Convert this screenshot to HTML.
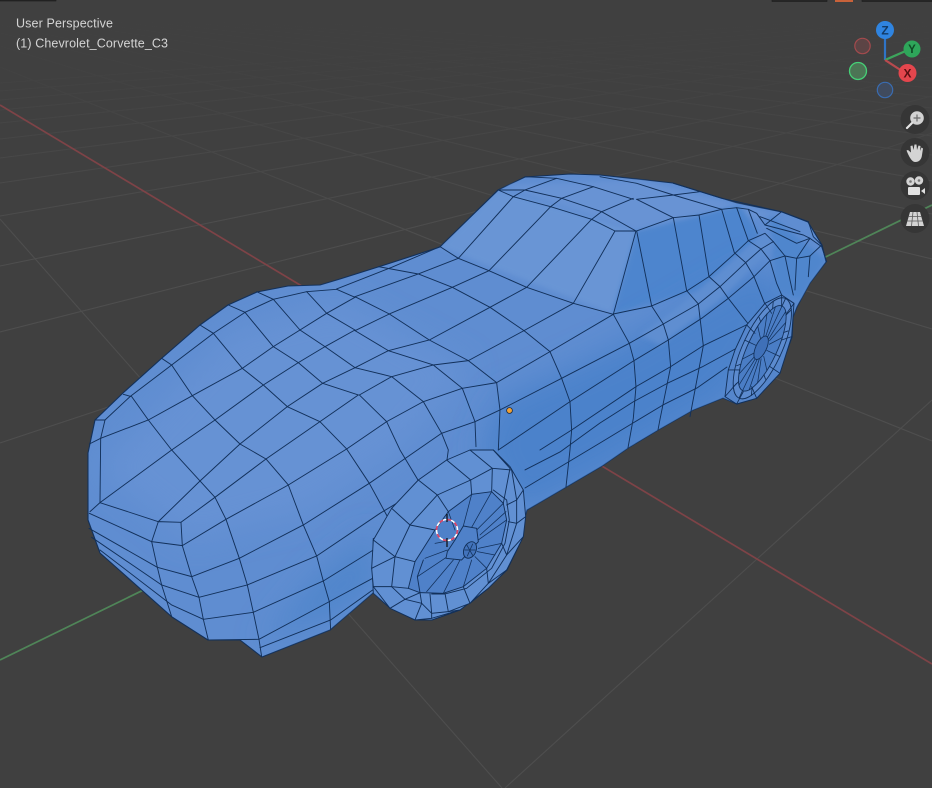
<!DOCTYPE html>
<html><head><meta charset="utf-8"><style>
html,body{margin:0;padding:0;background:#404040;width:932px;height:788px;overflow:hidden}
svg{position:absolute;left:0;top:0}
text{font-family:"Liberation Sans",sans-serif}
</style></head><body>
<svg width="932" height="788" viewBox="0 0 932 788" xmlns="http://www.w3.org/2000/svg">
<defs>
<clipPath id="bodyclip"><polygon points="88,510 88,453 95,420 123,393 162,358 200,325 228,305 257,292 288,286 320,285 340,279 378,267 440,247 498,190 525,177 570,174 600,175 673,183 737,203 782,212 808,222 822,245 826,262 810,283 797,307 793,317 792,337 780,370 757,398 737,404 723,398 693,410 658,430 628,448 602,466 527,510 525,517 523,537 507,570 488,588 460,610 432,620 415,620 390,608 373,593 330,630 262,657 240,640 208,640 172,617 100,553 88,520"/></clipPath>
<filter id="b8" x="-30%" y="-30%" width="160%" height="160%"><feGaussianBlur stdDeviation="15"/></filter>
<filter id="b3" x="-30%" y="-30%" width="160%" height="160%"><feGaussianBlur stdDeviation="2.500"/></filter>
<linearGradient id="fade" x1="0" y1="0" x2="0" y2="1"><stop offset="0" stop-color="#404040" stop-opacity="1"/><stop offset=".3" stop-color="#404040" stop-opacity=".88"/><stop offset=".65" stop-color="#404040" stop-opacity=".45"/><stop offset="1" stop-color="#404040" stop-opacity="0"/></linearGradient>
</defs>
<rect width="932" height="788" fill="#404040"/>
<!-- grid -->
<g stroke="#4e4e4e" stroke-width="1.100" fill="none">
<path d="M932,400L505,788M932,133L0,443M932,96L0,332M932,74L0,266M932,57L0,216M932,46L0,183M932,38L0,158M932,32L0,139M932,26L0,123M932,22L0,110M932,19L0,100M932,16L0,91M932,13L0,83"/>
<path d="M0,219L502,788M0,67L932,441M0,46L932,329M0,33L932,259M0,25L932,214M0,19L932,181M0,14L932,155M0,11L932,136M0,8L932,120M0,6L932,108M0,4L932,97M0,2L932,88M0,1L932,81M0,0L932,68"/>
</g>
<rect x="0" y="0" width="932" height="240" fill="url(#fade)"/>
<line x1="0" y1="105" x2="932" y2="664" stroke="#7e4347" stroke-width="1.700"/>
<line x1="0" y1="660" x2="932" y2="205" stroke="#4f8558" stroke-width="1.700"/>

<!-- toolbar remnants -->
<g fill="#2b2b2b" stroke="#1c1c1c" stroke-width=".6"><rect x="0" y="0" width="56" height="1"/><rect x="772" y="0" width="55" height="1.500"/><rect x="862" y="0" width="70" height="1.500"/></g>
<rect x="835" y="0" width="18" height="2" fill="#c8623a"/>

<!-- car body -->
<polygon points="88,510 88,453 95,420 123,393 162,358 200,325 228,305 257,292 288,286 320,285 340,279 378,267 440,247 498,190 525,177 570,174 600,175 673,183 737,203 782,212 808,222 822,245 826,262 810,283 797,307 793,317 792,337 780,370 757,398 737,404 723,398 693,410 658,430 628,448 602,466 527,510 525,517 523,537 507,570 488,588 460,610 432,620 415,620 390,608 373,593 330,630 262,657 240,640 208,640 172,617 100,553 88,520" fill="#5f8dd1" stroke="#12305a" stroke-width="1.100" stroke-linejoin="round"/>
<g clip-path="url(#bodyclip)">
<polygon points="100,470 230,330 340,300 470,370 400,450 310,510 190,540" fill="#6692d4" filter="url(#b8)"/>
<polygon points="440,247 498,190 637,231 613,314" fill="#6995d5" filter="url(#b3)"/>
<polygon points="500,185 640,180 780,215 640,232" fill="#6793d4" filter="url(#b3)"/>
<polygon points="637,231 613,314 700,290 760,235 740,205" fill="#4e85ce" filter="url(#b3)"/>
<polygon points="500,400 620,345 760,265 795,300 730,400 600,475 520,515 480,450" fill="#4c82cb" filter="url(#b8)"/>
<polygon points="260,645 335,615 373,590 375,530 310,585" fill="#5085cb" filter="url(#b8)"/>
<polygon points="770,215 826,260 800,300 775,290" fill="#5086cd" filter="url(#b3)"/>
<polygon points="640,335 700,290 765,235 775,245 720,300 660,345" fill="#5f8ed1" filter="url(#b3)"/>
</g>

<g fill="none" stroke="#12305a" stroke-width="2.800" stroke-linejoin="round" stroke-linecap="round" transform="translate(80 280) scale(.3333)">
<polyline points="28,492 62,475 205,420 337,347 487,265 580,200 660,150 740,100 825,52"/>
<polyline points="75,420 150,350 275,255 400,160 495,97 580,58 680,35 770,28"/>
<polyline points="60,668 275,510 405,420 550,315 655,248 735,200 825,150"/>
<polyline points="235,725 360,603 480,492 622,380 728,310 825,263"/>
<polyline points="303,727 405,652 558,537 720,425 835,345"/>
<polyline points="307,797 438,718 625,615 800,507 920,425"/>
<polyline points="335,890 478,835 670,735 868,610 1086,459"/>
<polyline points="357,952 502,915 710,828 900,700 1000,640"/>
<polyline points="370,1018 520,997 730,903 880,810"/>
<polyline points="385,1080 537,1078 748,965 878,895"/>
<polyline points="540,1103 752,1020 878,930"/>
<polyline points="130,343 155,350 205,420 275,510 360,603 405,652 438,718 478,835 502,915 520,997 537,1078 545,1130"/>
<polyline points="245,235 275,255 337,347 405,420 480,492 558,537 625,615 670,735 710,828 730,903 748,965 752,1050"/>
<polyline points="360,135 400,160 487,265 550,315 622,380 720,425 800,507 868,610 936,735"/>
<polyline points="445,75 495,97 580,200 655,248 728,310 835,345"/>
<polyline points="530,35 580,58 660,150 735,200 825,263"/>
<polyline points="680,35 740,100 825,150"/>
<polyline points="770,28 825,52"/>
<polyline points="45,420 75,420 62,475 60,668 30,695"/>
<polyline points="60,668 235,725 303,727 307,797 215,785 235,725"/>
<polyline points="28,700 215,785 232,862 245,915 275,1010"/>
<polyline points="307,797 335,890 357,952 370,1018 385,1080"/>
<polyline points="27,745 232,862 335,890"/>
<polyline points="35,772 245,915 357,952"/>
<polyline points="60,810 275,975 370,1018"/>
<polyline points="880,775 878,895 880,940"/>
</g>

<g fill="none" stroke="#12305a" stroke-width="2.800" stroke-linejoin="round" stroke-linecap="round" transform="translate(340 170) scale(.3333)">
<polyline points="-10,357 155,292 300,230 475,60"/>
<polyline points="45,380 235,312 355,265 520,80"/>
<polyline points="45,482 148,432 337,352 447,302 632,110"/>
<polyline points="45,593 145,542 268,510 450,412 560,352 755,148"/>
<polyline points="58,675 155,620 280,585 385,572 552,482 700,400 825,183"/>
<polyline points="140,755 250,695 367,655 470,638 630,545 820,433 888,183"/>
<polyline points="305,790 405,755 480,720 665,625 868,520"/>
<polyline points="475,840 690,695 882,572"/>
<polyline points="600,840 695,780 888,650"/>
<polyline points="115,290 235,312 337,352 450,412 552,482 630,545 665,625 690,695 695,780 690,840 678,951"/>
<polyline points="45,380 148,432 268,510 385,572 470,638 480,720 475,840"/>
<polyline points="45,482 145,542 280,585 367,655 405,755 408,830"/>
<polyline points="45,593 155,620 250,695 305,790 325,840 321,870"/>
<polyline points="58,675 140,755 180,840 234,930"/>
<polyline points="300,230 355,265 447,302 560,352 700,400 820,433 868,520 882,572 888,650 880,745 864,834"/>
<polyline points="475,60 520,80 632,110 755,148 825,183 888,183"/>
<polyline points="475,60 555,60 665,85 785,125 888,183"/>
<polyline points="520,80 555,60 650,25"/>
<polyline points="632,110 665,85 760,50"/>
<polyline points="755,148 785,125 880,85"/>
<polyline points="555,20 650,25 760,50 880,88"/>
</g>

<g fill="none" stroke="#12305a" stroke-width="2.800" stroke-linejoin="round" stroke-linecap="round" transform="translate(600 170) scale(.3333)">
<polyline points="110,183 220,143 297,135 365,118 410,113 445,118 470,130 495,165"/>
<polyline points="0,20 110,40 220,75 365,118"/>
<polyline points="110,88 220,143"/>
<polyline points="110,88 220,75 300,65"/>
<polyline points="220,40 365,85 545,125 625,155"/>
<polyline points="40,432 155,408 262,362 327,320 405,250 445,212 495,190 520,215"/>
<polyline points="110,183 155,408 190,462 205,510 212,590 180,748 174,780"/>
<polyline points="220,143 260,362 295,402 310,527 270,740"/>
<polyline points="297,135 327,320 360,350 385,385 445,462"/>
<polyline points="365,118 403,248 437,278 462,320 497,408"/>
<polyline points="410,113 445,212 483,237 510,272 530,340 545,375"/>
<polyline points="445,118 472,190"/>
<polyline points="520,215 555,258 570,330 580,375"/>
<polyline points="590,265 585,360"/>
<polyline points="630,258 625,320"/>
<polyline points="88,520 190,462 295,402 360,350 437,278 483,237 520,215"/>
<polyline points="102,572 205,510 305,445 385,385 462,320 510,272 555,258 590,265 630,258 665,225"/>
<polyline points="108,650 212,590 310,527 445,462"/>
<polyline points="-225,900 -120,846 0,759 99,696 204,639 306,591 411,534"/>
<polyline points="-225,954 0,819 99,759 189,705 291,654 381,591"/>
<polyline points="495,165 545,125"/>
<polyline points="495,165 610,195 630,205 590,265"/>
<polyline points="500,175 590,220 630,205 665,230 680,275"/>
<polyline points="625,155 640,200 665,225"/>
<polyline points="480,140 600,185"/>
</g>

<!-- rear wheel -->
<g transform="translate(600 170) scale(.3333)" stroke-linejoin="round" stroke-linecap="round">
<polygon points="375,680 385,600 405,540 440,465 495,400 545,375 582,400 575,500 540,610 470,685 410,702" fill="#5586cc" stroke="#12305a" stroke-width="2.800"/>
<g transform="translate(487 535) rotate(25)">
<ellipse cx="0" cy="0" rx="58" ry="165" fill="#5c8bcf" stroke="#12305a" stroke-width="2.600"/>
<ellipse cx="0" cy="0" rx="44" ry="140" fill="#4a7dc5" stroke="#12305a" stroke-width="2.600"/>
<path d="M0,-30L0,-140M5,-30L17,-130M10,-30L31,-100M14,-20L41,-55M15,0L44,0M14,20L41,55M10,30L31,100M5,30L17,130M0,30L0,140M-5,30L-17,130M-10,30L-31,100M-14,20L-41,55M-15,0L-44,0M-14,-20L-41,-55M-10,-30L-31,-100M-5,-30L-17,-130" stroke="#12305a" stroke-width="2.200" fill="none"/>
<ellipse cx="-4" cy="0" rx="16" ry="38" fill="#3f70b8" stroke="#12305a" stroke-width="2.600"/>
<path d="M-58,0L-44,0M58,0L44,0M0,-165L0,-140M0,165L0,140M-48,-80L-38,-70M48,-80L38,-70M-48,80L-38,70M48,80L38,70M-30,-142L-22,-120M30,-142L22,-120M-30,142L-22,120M30,142L22,120" stroke="#12305a" stroke-width="2.600" fill="none"/>
</g>
<path d="M375,680L410,640M385,600L420,600M440,465L465,490M495,400L515,430M545,375L545,410M582,400L560,430M575,500L545,510M540,610L510,590M470,685L455,650M410,702L430,665" stroke="#12305a" stroke-width="2.600" fill="none"/>
</g>

<!-- front wheel -->
<g transform="translate(360 440) scale(.3333)" stroke-linejoin="round" stroke-linecap="round" stroke="#12305a" stroke-width="2.800">
<polygon points="40,300 95,205 175,120 260,60 330,30 400,30 450,80 490,150 497,230 490,290 440,390 385,445 300,510 215,535 165,540 90,505 40,440 35,385" fill="#6190d3"/>
<polygon points="105,350 95,440 135,478 185,490 215,520 265,515 330,490 385,430 440,345 470,250 470,180 455,90 397,85 332,120 232,165 150,255" fill="#6190d3"/>
<polygon points="145,445 165,365 225,270 265,215 335,163 395,155 430,190 440,240 425,310 380,385 310,440 250,460 180,458" fill="#4f81c9"/>
<polyline points="185,490 180,458 172,410 190,360" fill="none"/>
<polyline points="215,462 255,462 320,445 395,385 435,310 448,240 440,180 400,150" fill="none"/>
<path d="M40,300L105,350L165,365M95,205L150,255L225,270M175,120L232,165L265,215M260,60L332,120L335,163M330,30L397,85L395,155M400,30L450,85L430,190M490,150L470,180L440,195M497,230L470,250L445,245M490,290L440,345L425,310M440,390L385,430L380,385M385,445L330,490L310,440M300,510L265,515L255,460M215,535L215,520L210,462M165,540L185,490M90,505L135,478L180,458M40,440L95,440L145,445M35,385L105,350" fill="none"/>
<path d="M280,300L225,310M262,330L195,355M262,350L172,410M280,360L200,455M300,360L250,460M335,360L310,440M345,350L380,385M355,325L425,310M355,300L440,240M350,270L430,190M335,262L395,155M310,258L335,163M285,270L265,215M360,285L438,215M352,335L405,345" fill="none" stroke-width="2.300"/>
<polygon points="262,335 258,355 305,360 355,305 350,265 310,258 285,300" fill="#4f81c9"/>
<ellipse cx="330" cy="330" rx="18" ry="26" transform="rotate(25 330 330)" fill="#4273bb"/>
<path d="M314,330L346,330M320,314L338,346M338,312L322,348" fill="none" stroke-width="2.200"/>
</g>

<!-- 3D cursor -->
<g fill="none">
<circle cx="447" cy="530" r="10.500" stroke="#ffffff" stroke-width="1.600"/>
<circle cx="447" cy="530" r="10.500" stroke="#d6456a" stroke-width="1.800" stroke-dasharray="4.100 4.100"/>
<path d="M447,514V522M447,538V547" stroke="#0a0a0a" stroke-width="1.200"/>
</g>
<circle cx="509.500" cy="410.500" r="2.900" fill="#f0a033" stroke="#1c2a40" stroke-width=".8"/>

<!-- gizmo -->
<g>
<line x1="885" y1="60" x2="885" y2="32" stroke="#2f74c6" stroke-width="2.200"/>
<line x1="885" y1="60" x2="908" y2="50" stroke="#3da45c" stroke-width="2.200"/>
<line x1="885" y1="60" x2="902" y2="71" stroke="#b84a4e" stroke-width="2.200"/>
<circle cx="862.500" cy="46" r="7.700" fill="#5c4445" stroke="#a34a4d" stroke-width="1.200"/>
<circle cx="858" cy="71" r="8.500" fill="#4c7555" stroke="#46d077" stroke-width="1.300"/>
<circle cx="885" cy="90" r="7.700" fill="#404b5e" stroke="#3a6cb0" stroke-width="1.200"/>
<circle cx="885" cy="30" r="9" fill="#2f84e0"/>
<circle cx="912" cy="49" r="8.500" fill="#2ea65a"/>
<circle cx="907.500" cy="73" r="9" fill="#e4464d"/>
<text x="885" y="34.500" text-anchor="middle" font-size="12" font-weight="700" fill="#123a66">Z</text>
<text x="912" y="53" text-anchor="middle" font-size="11.500" font-weight="700" fill="#0f4a25">Y</text>
<text x="907.500" y="77.500" text-anchor="middle" font-size="12" font-weight="700" fill="#5a0f12">X</text>
</g>

<!-- nav buttons -->
<g fill="#363636"><circle cx="915" cy="119.500" r="14.500"/><circle cx="915" cy="152.500" r="14.500"/><circle cx="915" cy="185.500" r="14.500"/><circle cx="915" cy="218.500" r="14.500"/></g>
<g>
<circle cx="917" cy="118" r="6.800" fill="#d2d2d2"/>
<path d="M917,114.500V121.500M913.500,118H920.500" stroke="#6a6a6a" stroke-width="1.200"/>
<path d="M912,123L907,128" stroke="#e4e4e4" stroke-width="2.200" stroke-linecap="round"/>
<path d="M908,154 L906.500,150.500 L908,150 L911,152.500 L910.500,146 L912.500,145.500 L913.500,150 L914.500,144.500 L916.500,144.500 L917,150 L918.500,145.500 L920.500,146 L920,151 L921.500,147.500 L923,148.500 L922,155 C921.500,160 918.500,162 915.500,162 C912,162 910,158 908,154 Z" fill="#d4d4d4"/>
<circle cx="910.500" cy="181.500" r="4.200" fill="#d4d4d4"/><circle cx="919" cy="180.500" r="4.200" fill="#d4d4d4"/>
<circle cx="910.500" cy="181.500" r="1.300" fill="#777"/><circle cx="919" cy="180.500" r="1.300" fill="#777"/>
<rect x="908" y="187" width="12" height="8" rx="1" fill="#e0e0e0"/>
<polygon points="921,191 925,188 925,194" fill="#e0e0e0"/>
<polygon points="910,212 920,212 924,226 906,226" fill="#d4d4d4"/>
<path d="M908.700,216.500H921.300M907.500,221H922.500M913,212L911.500,226M917,212L918.500,226" stroke="#5a5a5a" stroke-width=".8"/>
</g>

<!-- text -->
<g font-size="12.500" fill="#d4d4d4">
<text x="16" y="27.500" textLength="97" lengthAdjust="spacing">User Perspective</text>
<text x="16" y="47.500" textLength="152" lengthAdjust="spacing">(1) Chevrolet_Corvette_C3</text>
</g>
</svg>
</body></html>
